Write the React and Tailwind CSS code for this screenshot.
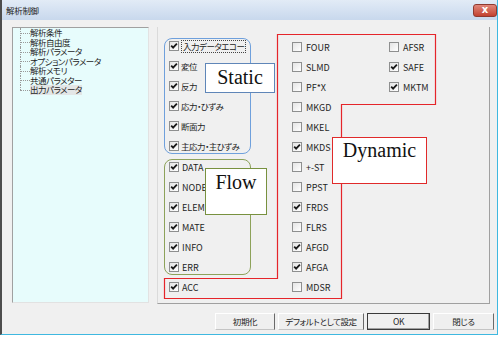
import React from "react";

const treeItems = [
  "解析条件",
  "解析自由度",
  "解析パラメータ",
  "オプションパラメータ",
  "解析メモリ",
  "共通パラメター",
  "出力パラメータ",
];

const staticItems = ["入力データエコー", "変位", "反力", "応力・ひずみ", "断面力", "主応力・主ひずみ"];
const flowItems = ["DATA", "NODE", "ELEM", "MATE", "INFO", "ERR"];

const dynCol1 = [
  { label: "FOUR", on: false },
  { label: "SLMD", on: false },
  { label: "PF*X", on: false },
  { label: "MKGD", on: false },
  { label: "MKEL", on: false },
  { label: "MKDS", on: true },
  { label: "+-ST", on: false },
  { label: "PPST", on: false },
  { label: "FRDS", on: true },
  { label: "FLRS", on: false },
  { label: "AFGD", on: true },
  { label: "AFGA", on: true },
  { label: "MDSR", on: false },
];

const dynCol2 = [
  { label: "AFSR", on: false },
  { label: "SAFE", on: true },
  { label: "MKTM", on: true },
];

function Box({ on }) {
  return (
    <div className="w-[10px] h-[10px] shrink-0 border border-[#8e8f8f] bg-gradient-to-br from-[#e4e4e4] to-[#ffffff] flex items-center justify-center">
      {on && (
        <svg width="8" height="8" viewBox="0 0 8 8">
          <path d="M1.2 3.6 L3.1 5.6 L6.9 1.6" fill="none" stroke="#1a1a1a" strokeWidth="1.8" />
        </svg>
      )}
    </div>
  );
}

function Row({ on, label, focus, jp, gap = "gap-[3px]" }) {
  const txt = jp ? "text-[8.5px] tracking-[-0.5px]" : "text-[9px]";
  return (
    <div className={`flex h-[14px] items-center ${gap}`}>
      <Box on={on} />
      {focus ? (
        <span className={`border border-dotted border-[#444] px-[1px] leading-[11px] whitespace-nowrap ${txt}`}>{label}</span>
      ) : (
        <span className={`leading-none whitespace-nowrap ${txt}`}>{label}</span>
      )}
    </div>
  );
}

function Button({ w, children, def }) {
  return (
    <div
      className={`${w} h-[17px] flex items-center justify-center text-[8.5px] tracking-[-0.4px] bg-[#efefef] ${
        def
          ? "border border-[#3a3a3a] shadow-[inset_-1px_-1px_0_#a0a0a0]"
          : "border border-t-white border-l-white border-r-[#6a6a6a] border-b-[#c4c4c4]"
      }`}
    >
      {children}
    </div>
  );
}

export default function App() {
  return (
    <div className="relative w-[500px] h-[337px] bg-white overflow-hidden font-['Noto_Sans_CJK_JP','Noto_Sans',sans-serif] [font-feature-settings:'palt'] text-[#1e1e1e]">
      <div className="w-[498px] h-[335px] flex flex-col bg-[#f0f0f0] border-l-2 border-l-[#4d4d4d] border-r border-r-[#3fb8e0] border-b border-b-[#3fb8e0]">
        {/* title bar */}
        <div className="flex h-[20px] items-center justify-between pl-[4px] bg-gradient-to-b from-[#e2ebf6] to-[#c8d8ed]">
          <span className="text-[8.5px] tracking-[-0.3px] text-[#222]">解析制御</span>
          <div className="w-[24px] h-[13px] rounded-[3px] border border-[#8e3a30] bg-gradient-to-b from-[#e0867a] to-[#c2412f] flex items-center justify-center">
            <span className="text-white text-[10px] font-bold leading-none font-['DejaVu_Sans',sans-serif]">x</span>
          </div>
        </div>

        {/* body */}
        <div className="flex gap-[8px] pl-[10px] pt-[7px]">
          {/* tree */}
          <div className="w-[137px] h-[276px] bg-[#e7fcfc] border border-t-[#a0a0a0] border-l-[#a0a0a0] border-r-[#e2e2e2] border-b-[#e2e2e2]">
            <div className="ml-[7px] flex flex-col">
              {treeItems.map((t, i) => (
                <div key={t} className="flex h-[9.5px] items-center">
                  <div className="relative w-[10px] self-stretch">
                    <div
                      className={`${
                        i === treeItems.length - 1 ? "h-1/2" : "h-full"
                      } border-l border-dotted border-[#9a9a9a]`}
                    />
                    <div className="absolute left-0 top-1/2 w-[10px] border-t border-dotted border-[#9a9a9a]" />
                  </div>
                  <span
                    className={`text-[8.5px] tracking-[-0.5px] leading-[9.5px] whitespace-nowrap ${
                      i === treeItems.length - 1 ? "bg-[#e3e6e6]" : ""
                    }`}
                  >
                    {t}
                  </span>
                </div>
              ))}
            </div>
          </div>

          {/* main panel */}
          <div className="w-[333px] h-[277px] flex border-l border-r border-b border-l-[#dadada] border-r-[#a0a0a0] border-b-[#a0a0a0]">
            {/* column A */}
            <div className="ml-[6px] mt-[11px] w-[87px] flex flex-col">
              <div className="flex flex-col gap-[6px] border border-[#6fa0dc] rounded-[8px] pl-[4px]">
                {staticItems.map((t, i) => (
                  <Row key={t} on jp label={t} focus={i === 0} gap="gap-[2px]" />
                ))}
              </div>
              <div className="mt-[5px] flex flex-col gap-[6px] border border-[#8da25a] rounded-[8px] pl-[4px]">
                {flowItems.map((t) => (
                  <Row key={t} on label={t} />
                ))}
              </div>
              <div className="mt-[5px] pl-[5px]">
                <Row on label="ACC" />
              </div>
            </div>

            {/* column B */}
            <div className="ml-[41px] mt-[13px] w-[97px] flex flex-col gap-[6px]">
              {dynCol1.map((d) => (
                <Row key={d.label} on={d.on} label={d.label} gap="gap-[4px]" />
              ))}
            </div>

            {/* column C */}
            <div className="mt-[13px] flex flex-col gap-[6px]">
              {dynCol2.map((d) => (
                <Row key={d.label} on={d.on} label={d.label} gap="gap-[4px]" />
              ))}
            </div>
          </div>
        </div>

        {/* buttons */}
        <div className="flex justify-end gap-[3px] mt-[9px] pr-[3px]">
          <Button w="w-[60px]">初期化</Button>
          <Button w="w-[86px]">デフォルトとして設定</Button>
          <Button w="w-[63px]" def>OK</Button>
          <Button w="w-[61px]">閉じる</Button>
        </div>
      </div>

      {/* annotations */}
      <svg className="absolute left-0 top-0" width="500" height="337">
        <polygon
          points="277.5,34.5 435.5,34.5 435.5,104.5 341.5,104.5 341.5,298.5 164.5,298.5 164.5,278.5 277.5,278.5"
          fill="none"
          stroke="#e5252a"
          strokeWidth="1.2"
        />
      </svg>
      <div className="absolute left-[205px] top-[63px] w-[70px] h-[30px] bg-white border border-[#5f86b8] flex justify-center pt-[3px]">
        <span className="text-[20px] leading-none text-[#111] font-['Liberation_Serif',serif]">Static</span>
      </div>
      <div className="absolute left-[205px] top-[168px] w-[62px] h-[47px] bg-white border border-[#78913f] flex justify-center pt-[3px]">
        <span className="text-[20px] leading-none text-[#111] font-['Liberation_Serif',serif]">Flow</span>
      </div>
      <div className="absolute left-[332px] top-[137px] w-[95px] h-[47px] bg-white border border-[#e02a2a] flex justify-center pt-[2px]">
        <span className="text-[20px] leading-none text-[#111] font-['Liberation_Serif',serif]">Dynamic</span>
      </div>
    </div>
  );
}
